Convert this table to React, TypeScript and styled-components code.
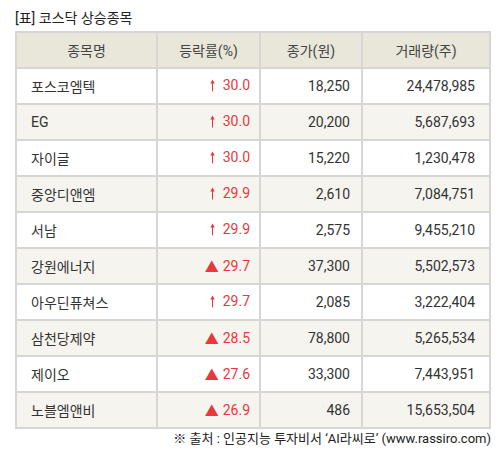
import React from 'react';
import styled, { createGlobalStyle } from 'styled-components';

const GlobalStyle = createGlobalStyle`
	body {
		margin: 0;
		background: #fff;
		font-family: Roboto, 'Noto Sans CJK KR', sans-serif;
		color: #333;
	}
`;

const Page = styled.div`
	width: 503px;
	padding: 9px 0 0 15px;
	box-sizing: border-box;
`;

const Title = styled.h3`
	margin: 0 0 4px;
	font-size: 14px;
	font-weight: 400;
	color: #222;
	line-height: 18px;
`;

const Table = styled.table`
	width: 474px;
	border-collapse: collapse;
	table-layout: fixed;
	border: 2px solid #d6d6d6;
	font-size: 14px;
`;

const HeadCell = styled.th<{ w: number }>`
	width: ${(p) => p.w}px;
	height: 34px;
	background: #e9e7da;
	border: 2px solid #d6d6d6;
	font-weight: 400;
	color: #444;
	text-align: center;
	padding: 0;
`;

const Row = styled.tr<{ alt: boolean }>`
	background: ${(p) => (p.alt ? '#f5f4ef' : '#fff')};
`;

const Cell = styled.td<{ align?: string; pr?: number }>`
	height: 34px;
	border: 2px solid #d6d6d6;
	padding: 0 ${(p) => p.pr ?? 12}px 0 14px;
	text-align: ${(p) => p.align ?? 'left'};
	color: #333;
	white-space: nowrap;
`;

const Rate = styled.span`
	color: #e8383d;
	display: inline-flex;
	align-items: center;
`;

const Tri = styled.span`
	font-size: 14px;
	margin-right: 4px;
`;

const Arrow = styled.svg`
	width: 5px;
	height: 13px;
	margin-right: 8px;
`;

const Source = styled.p`
	margin: 2px 0 0;
	width: 476px;
	text-align: right;
	font-size: 13px;
	line-height: 16px;
	color: #222;
`;

type Item = { name: string; rate: string; tri: boolean; price: string; volume: string };

const rows: Item[] = [
	{ name: '포스코엠텍', rate: '30.0', tri: false, price: '18,250', volume: '24,478,985' },
	{ name: 'EG', rate: '30.0', tri: false, price: '20,200', volume: '5,687,693' },
	{ name: '자이글', rate: '30.0', tri: false, price: '15,220', volume: '1,230,478' },
	{ name: '중앙디앤엠', rate: '29.9', tri: false, price: '2,610', volume: '7,084,751' },
	{ name: '서남', rate: '29.9', tri: false, price: '2,575', volume: '9,455,210' },
	{ name: '강원에너지', rate: '29.7', tri: true, price: '37,300', volume: '5,502,573' },
	{ name: '아우딘퓨쳐스', rate: '29.7', tri: false, price: '2,085', volume: '3,222,404' },
	{ name: '삼천당제약', rate: '28.5', tri: true, price: '78,800', volume: '5,265,534' },
	{ name: '제이오', rate: '27.6', tri: true, price: '33,300', volume: '7,443,951' },
	{ name: '노블엠앤비', rate: '26.9', tri: true, price: '486', volume: '15,653,504' }
];

const UpArrow = () => (
	<Arrow viewBox="0 0 5 13">
		<path d="M2.5 0.5 L0.3 4.5 L2 4.5 L2 12.5 L3 12.5 L3 4.5 L4.7 4.5 Z" fill="#e8383d" />
	</Arrow>
);

export default function App() {
	return (
		<Page>
			<GlobalStyle />
			<Title>[표] 코스닥 상승종목</Title>
			<Table>
				<thead>
					<tr>
						<HeadCell w={139}>종목명</HeadCell>
						<HeadCell w={101}>등락률(%)</HeadCell>
						<HeadCell w={100}>종가(원)</HeadCell>
						<HeadCell w={126}>거래량(주)</HeadCell>
					</tr>
				</thead>
				<tbody>
					{rows.map((r, i) => (
						<Row key={r.name} alt={i % 2 === 1}>
							<Cell>{r.name}</Cell>
							<Cell align="right" pr={9}>
								<Rate>
									{r.tri ? <Tri>▲</Tri> : <UpArrow />}
									{r.rate}
								</Rate>
							</Cell>
							<Cell align="right" pr={11}>{r.price}</Cell>
							<Cell align="right" pr={14}>{r.volume}</Cell>
						</Row>
					))}
				</tbody>
			</Table>
			<Source>※ 출처 : 인공지능 투자비서 ‘AI라씨로’ (www.rassiro.com)</Source>
		</Page>
	);
}
